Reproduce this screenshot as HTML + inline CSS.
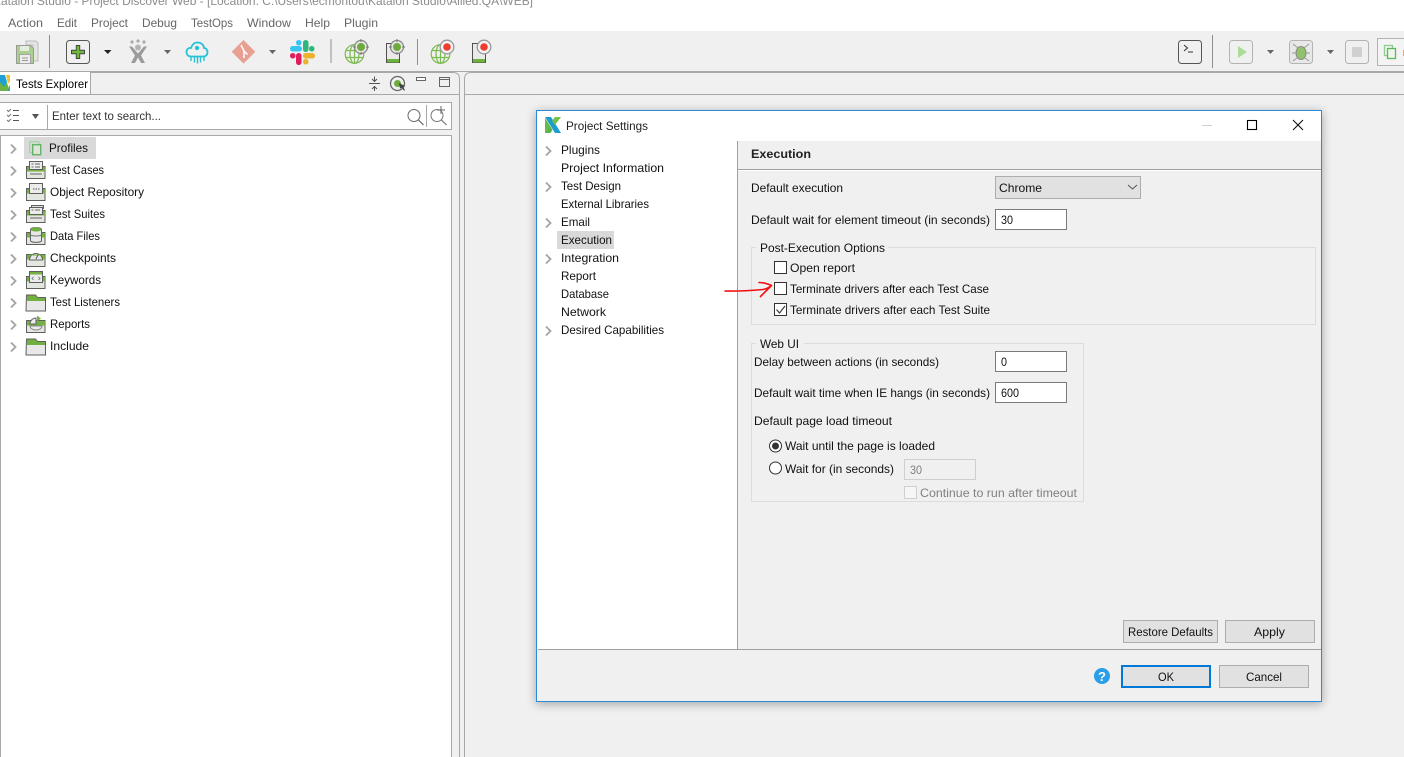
<!DOCTYPE html>
<html><head><meta charset="utf-8"><title>Project Settings</title>
<style>
html,body{margin:0;padding:0;background:#fff;width:1404px;height:757px;overflow:hidden}
svg{display:block}
text{font-family:"Liberation Sans",sans-serif;font-size:12px;fill:#111}
</style></head><body>
<svg width="1404" height="757" viewBox="0 0 1404 757" xmlns="http://www.w3.org/2000/svg">
<defs>
<filter id="sh" x="-5%" y="-5%" width="110%" height="110%"><feGaussianBlur stdDeviation="5"/></filter>
<g id="chev"><path d="M-3-4.500 1.500 0-3 4.500" fill="none" stroke="#a6a6a6" stroke-width="1.900"/></g>
<g id="base"><path d="M.5 5.500h18.500v12h-18.500z" fill="#e4e7e0" stroke="#5f5f5f"/><path d="M1 6h18v4.500h-18z" fill="#74b043"/></g>
<g id="folder"><path d="M.5 1.500h9l2 2.500h8v13.500h-19.500z" fill="#e8e8e8" stroke="#5f5f5f"/><path d="M1 2h8.500l2 2.500h7.500v3h-18z" fill="#6fb03e"/></g>
</defs>

<!-- window chrome -->
<rect width="1404" height="757" fill="#f0f0f0"/>
<rect width="1404" height="31" fill="#fff"/>
<text x="-7" y="5" textLength="540" lengthAdjust="spacingAndGlyphs" style="fill:#8c8c8c">Katalon Studio - Project Discover Web - [Location: C:\Users\ecmontou\Katalon Studio\Allied.QA\WEB]</text>
<text x="8" y="27" textLength="35" lengthAdjust="spacingAndGlyphs" style="fill:#666">Action</text>
<text x="57" y="27" textLength="20" lengthAdjust="spacingAndGlyphs" style="fill:#666">Edit</text>
<text x="91" y="27" textLength="37" lengthAdjust="spacingAndGlyphs" style="fill:#666">Project</text>
<text x="142" y="27" textLength="35" lengthAdjust="spacingAndGlyphs" style="fill:#666">Debug</text>
<text x="191" y="27" textLength="42" lengthAdjust="spacingAndGlyphs" style="fill:#666">TestOps</text>
<text x="247" y="27" textLength="44" lengthAdjust="spacingAndGlyphs" style="fill:#666">Window</text>
<text x="305" y="27" textLength="25" lengthAdjust="spacingAndGlyphs" style="fill:#666">Help</text>
<text x="344" y="27" textLength="34" lengthAdjust="spacingAndGlyphs" style="fill:#666">Plugin</text>

<!-- toolbar -->
<path d="M0 71.500H1404" stroke="#a8a8a8"/>
<path d="M49.500 35v33M331 39v24M417.500 39v26M1212.500 35v33" stroke="#8f8f8f"/>
<!-- save -->
<path d="M26 41h10l2 2v18h-5v-16h-7z" fill="#e4e4e4" stroke="#bbb"/>
<path d="M16.500 45.500h14l3 3v15h-17z" fill="#a9d08e" stroke="#9a9a9a"/>
<rect x="20" y="46" width="9" height="5" fill="#e4ecdf"/><rect x="19.500" y="54.500" width="11" height="9" fill="#ededed" stroke="#a5a5a5"/><path d="M22 58h6M22 60.500h6" stroke="#999"/>
<!-- new -->
<rect x="66.500" y="40.500" width="23" height="23" rx="3" fill="none" stroke="#555"/>
<path d="M78 45v14M71 52h14" stroke="#444" stroke-width="4.400"/>
<path d="M78 46v12M72 52h12" stroke="#6fb83c" stroke-width="2.600"/>
<path d="M104 50h7.500l-3.700 4z" fill="#222"/>
<!-- jenkins figure -->
<circle cx="138" cy="47.500" r="3" fill="#b4b4b4"/><circle cx="132" cy="42" r="1.600" fill="#aaa"/><circle cx="138" cy="41" r="1.600" fill="#aaa"/><circle cx="144" cy="42" r="1.600" fill="#aaa"/>
<path d="M129 46.500h3l6 7 6-7h3l-6 9 4 7.500h-4l-3-5.500-3 5.500h-4l4-7.500z" fill="#9b9b9b"/>
<path d="M164 50h7l-3.500 4z" fill="#666"/>
<!-- cloud -->
<path d="M191 56.500c-3.500 0-4.500-2.500-4.500-4.500 0-3 2.500-4.500 4.500-4 1-3.500 3.500-5.500 6.500-5.500 4 0 6.500 3 6.500 5.500 2 0 3.500 2 3.500 4.500 0 2-1.500 4-4 4z" fill="none" stroke="#26c3d8" stroke-width="1.800"/>
<path d="M191 56v5M194.500 56v6.500M197.500 56v7.500M200.500 56v6.500M204 56v5" stroke="#26c3d8" stroke-width="1.400"/>
<circle cx="197" cy="48" r="2.200" fill="#26c3d8"/>
<!-- git -->
<path d="M243.500 40l11.800 11.800-11.800 11.800-11.800-11.800z" fill="#e8a093"/>
<path d="M241 45l3 6v7M244 51l3.500 3.500" stroke="#fff" stroke-width="1.500" fill="none"/>
<path d="M269 50h7l-3.500 4z" fill="#666"/>
<!-- slack -->
<rect x="290" y="46" width="12" height="5.500" rx="2.700" fill="#36c5f0"/><rect x="296" y="40" width="5.500" height="5.500" rx="2.700" fill="#36c5f0"/>
<rect x="303" y="40" width="5.500" height="12" rx="2.700" fill="#2eb67d"/><rect x="309" y="46" width="5.500" height="5.500" rx="2.700" fill="#2eb67d"/>
<rect x="303" y="53" width="12" height="5.500" rx="2.700" fill="#ecb22e"/><rect x="303" y="59" width="5.500" height="5.500" rx="2.700" fill="#ecb22e"/>
<rect x="296" y="53" width="5.500" height="12" rx="2.700" fill="#e01e5a"/><rect x="290" y="53" width="5.500" height="5.500" rx="2.700" fill="#e01e5a"/>
<!-- spy globe/mobile -->
<g fill="none" stroke="#7dba52" stroke-width="1.200">
<circle cx="354.500" cy="54" r="9.300"/><ellipse cx="354.500" cy="54" rx="4.500" ry="9.300"/><path d="M346 50.500h17M346 57.500h17M354.500 44.500v19"/>
<circle cx="440.500" cy="54" r="9.300"/><ellipse cx="440.500" cy="54" rx="4.500" ry="9.300"/><path d="M432 50.500h17M432 57.500h17M440.500 44.500v19"/>
</g>
<rect x="386.500" y="43.500" width="13" height="19" fill="#eaeaea" stroke="#505050"/><rect x="387" y="59" width="12" height="3.500" fill="#6fb33f"/>
<rect x="472.500" y="43.500" width="13" height="19" fill="#eaeaea" stroke="#505050"/><rect x="473" y="59" width="12" height="3.500" fill="#6fb33f"/>
<g fill="#e8e8e8" stroke="#8a8a8a" stroke-width="1.300"><circle cx="361" cy="47" r="6.500"/><circle cx="397" cy="47" r="6.500"/></g>
<path d="M361 39v3M361 52v3M353 47h3M366 47h3M397 39v3M397 52v3M389 47h3M402 47h3" stroke="#777"/>
<circle cx="361" cy="47" r="4" fill="#6eaa3d"/><circle cx="397" cy="47" r="4" fill="#6eaa3d"/>
<circle cx="447" cy="47" r="6.800" fill="#f3f3f3" stroke="#999" stroke-width="1.300"/><circle cx="484" cy="47" r="6.800" fill="#f3f3f3" stroke="#999" stroke-width="1.300"/>
<circle cx="447" cy="47" r="3.800" fill="#f23b2f"/><circle cx="484" cy="47" r="3.800" fill="#f23b2f"/>
<!-- right toolbar -->
<rect x="1178.500" y="40.500" width="23" height="23" rx="3" fill="none" stroke="#555"/>
<path d="M1184 45l3.500 3-3.500 3M1188 52h5" stroke="#333" fill="none"/>
<rect x="1229.500" y="40.500" width="23" height="23" rx="3" fill="none" stroke="#b3b3b3"/>
<path d="M1238 46l9 6-9 6z" fill="#addb9a"/>
<path d="M1267 50h7l-3.500 4z" fill="#666"/>
<rect x="1289.500" y="40.500" width="23" height="23" rx="3" fill="#e8e8e8" stroke="#b3b3b3"/>
<ellipse cx="1301" cy="53" rx="5" ry="6.500" fill="#93c26c" stroke="#888"/>
<path d="M1293 44l5 4M1309 44l-5 4M1292 53h4M1310 53h-4M1293 61l4-3M1309 61l-4-3" stroke="#999"/>
<path d="M1327 50h7l-3.500 4z" fill="#666"/>
<rect x="1345.500" y="40.500" width="23" height="23" rx="3" fill="none" stroke="#b3b3b3"/>
<rect x="1352" y="47" width="10" height="10" fill="#d0d0d0"/>
<rect x="1377.500" y="38.500" width="30" height="27" fill="#f4f4f4" stroke="#b3b3b3"/>
<rect x="1384.500" y="45.500" width="8" height="10" fill="none" stroke="#8fcf8f" stroke-width="1.300"/><rect x="1387.500" y="48.500" width="8" height="10" fill="#eef5ea" stroke="#5cb85c" stroke-width="1.300"/>
<rect x="1403" y="50" width="1" height="6" fill="#ecb22e"/>

<!-- left part -->
<path d="M-1 94.500H90.500V72.500H453Q459.500 72.500 459.500 79V757" fill="none" stroke="#a8a8a8"/>
<path d="M0 72h90v22H0z" fill="#fff"/>
<path d="M90.500 72v22" stroke="#a8a8a8"/>
<path d="M90 94.500H459" stroke="#a8a8a8"/>
<path d="M0 75h4l6 16H0z" fill="#6eb33f"/><path d="M0 75h5l2 7-3 5-4-5z" fill="#1e9fd8"/><path d="M6 75h4v6l-2 3z" fill="#f2c230"/><path d="M10 84v7H8z" fill="#2b9fd8"/>
<text x="16" y="88" textLength="72" lengthAdjust="spacingAndGlyphs" style="fill:#000">Tests Explorer</text>
<path d="M374.500 76.500v5M374.500 86v5M369 83.500h11M372 79l2.500 2.500 2.500-2.500M372 89l2.500-2.500 2.500 2.500" stroke="#555" fill="none"/>
<circle cx="397.500" cy="83.500" r="7" fill="none" stroke="#666" stroke-width="1.300"/><circle cx="397.500" cy="83.500" r="3.500" fill="#6eaa3d"/><path d="M399 83l6 3-2 1 2 3-1 .7-2-3-2 1z" fill="#444"/>
<rect x="416.500" y="77.500" width="9" height="3" fill="#fff" stroke="#666"/>
<rect x="439.500" y="77.500" width="10" height="9" fill="none" stroke="#666"/><path d="M440 79.500h9" stroke="#666"/>

<!-- search -->
<rect x="-1" y="102.500" width="452.500" height="27" fill="#fff" stroke="#a8a8a8"/>
<path d="M47.500 105v24M426.500 105v22" stroke="#a8a8a8"/>
<path d="M7 110l1.500 1.500 2.500-2.500M7 115l1.500 1.500 2.500-2.500M7 120l1.500 1.500 2.500-2.500" stroke="#777" fill="none"/>
<path d="M13 110.500h6M13 115.500h6M13 120.500h6" stroke="#555"/>
<path d="M32 114h7l-3.500 5z" fill="#555"/>
<text x="52" y="120" textLength="109" lengthAdjust="spacingAndGlyphs" style="fill:#333">Enter text to search...</text>
<circle cx="414" cy="115.500" r="6" fill="none" stroke="#666"/><path d="M418.500 120l5 5" stroke="#666" stroke-width="1.200"/>
<circle cx="437" cy="115.500" r="6" fill="none" stroke="#777"/><path d="M441.500 120l5 5" stroke="#777" stroke-width="1.200"/><path d="M441 106v8M437 110h8" stroke="#666"/>

<!-- tree -->
<path d="M.5 757V135.500H451.500V757" fill="#fff" stroke="#a8a8a8"/>
<rect x="24" y="137" width="72" height="22" fill="#d9d9d9"/>
<use href="#chev" x="14" y="149"/><use href="#chev" x="14" y="171"/><use href="#chev" x="14" y="193"/><use href="#chev" x="14" y="215"/><use href="#chev" x="14" y="237"/><use href="#chev" x="14" y="259"/><use href="#chev" x="14" y="281"/><use href="#chev" x="14" y="303"/><use href="#chev" x="14" y="325"/><use href="#chev" x="14" y="347"/>
<rect x="29.700" y="141.700" width="9" height="11" fill="none" stroke="#a6d8a6" stroke-width="1.400"/><rect x="32.700" y="144.700" width="8" height="10" fill="#dfe3dc" stroke="#62b562" stroke-width="1.400"/>
<!-- test cases -->
<g transform="translate(26 161)"><use href="#base"/><rect x="3.500" y=".5" width="13" height="8" fill="#ececec" stroke="#5f5f5f"/><path d="M5.500 3h2M9 3h5M5.500 6h2M9 6h5M4 13h12" stroke="#666"/></g>
<!-- object repo -->
<g transform="translate(26 183)"><use href="#base"/><rect x="3.500" y=".5" width="13" height="10" fill="#ececec" stroke="#5f5f5f"/><path d="M7 6h1.500M9.500 6H11M12 6h1.500" stroke="#555"/></g>
<!-- test suites -->
<g transform="translate(26 205)"><use href="#base"/><rect x="5.500" y=".5" width="12" height="3" fill="#ddd" stroke="#5f5f5f"/><rect x="3.500" y="2.500" width="13" height="7" fill="#ececec" stroke="#5f5f5f"/><path d="M5.500 5h2M9 5h5M4 13h12" stroke="#666"/></g>
<!-- data -->
<g transform="translate(26 227)"><use href="#base"/><path d="M4.500 2.500c0-2.500 11-2.500 11 0v11c0 2.500-11 2.500-11 0z" fill="#e8e8e8" stroke="#5f5f5f"/><ellipse cx="10" cy="2.500" rx="5.500" ry="2" fill="#6fb03e"/><path d="M4.500 7.500c0 2 11 2 11 0" fill="none" stroke="#777"/></g>
<!-- checkpoint -->
<g transform="translate(26 249)"><use href="#base"/><path d="M3.500 11a6.500 6.500 0 0 1 13 0z" fill="#e8e8e8" stroke="#5f5f5f"/><path d="M3.500 6h13" stroke="#6fb03e"/><path d="M10 10l2-4" stroke="#555"/></g>
<!-- keywords -->
<g transform="translate(26 271)"><use href="#base"/><rect x="3.500" y=".5" width="13" height="11" fill="#ececec" stroke="#5f5f5f"/><rect x="4" y="1" width="12" height="2.500" fill="#74b043"/><path d="M7.500 6L6 7.500 7.500 9M12.500 6L14 7.500 12.500 9" fill="none" stroke="#888"/></g>
<use href="#folder" x="26" y="293.500"/>
<!-- reports -->
<g transform="translate(26 315)"><use href="#base"/><path d="M4 9a6 6 0 0 1 6-6v6z" fill="#ececec" stroke="#5f5f5f"/><path d="M11 .5l4 3-4 3z" fill="#6fb03e"/><path d="M4 11a6 4 0 0 0 12 0z" fill="#ececec" stroke="#888"/></g>
<use href="#folder" x="26" y="337.500"/>
<text x="49" y="152" textLength="39" lengthAdjust="spacingAndGlyphs">Profiles</text>
<text x="50" y="174" textLength="54" lengthAdjust="spacingAndGlyphs">Test Cases</text>
<text x="50" y="196" textLength="94" lengthAdjust="spacingAndGlyphs">Object Repository</text>
<text x="50" y="218" textLength="55" lengthAdjust="spacingAndGlyphs">Test Suites</text>
<text x="50" y="240" textLength="50" lengthAdjust="spacingAndGlyphs">Data Files</text>
<text x="50" y="262" textLength="66" lengthAdjust="spacingAndGlyphs">Checkpoints</text>
<text x="50" y="284" textLength="51" lengthAdjust="spacingAndGlyphs">Keywords</text>
<text x="50" y="306" textLength="70" lengthAdjust="spacingAndGlyphs">Test Listeners</text>
<text x="50" y="328" textLength="40" lengthAdjust="spacingAndGlyphs">Reports</text>
<text x="50" y="350" textLength="39" lengthAdjust="spacingAndGlyphs">Include</text>

<!-- right editor area -->
<path d="M464.500 757V79Q464.500 72.500 471 72.500H1404" fill="none" stroke="#a8a8a8"/>
<path d="M465 94.500H1404" stroke="#a8a8a8"/>

<!-- dialog -->
<rect x="536" y="112" width="786" height="592" fill="#000" opacity=".32" filter="url(#sh)"/>
<rect x="536.500" y="110.500" width="785" height="591" fill="#f0f0f0" stroke="#2b8ad6"/>
<rect x="537" y="111" width="784" height="30" fill="#fff"/>
<rect x="537" y="141" width="200" height="508" fill="#fff"/>
<path d="M737.500 141V649" stroke="#a0a0a0"/>
<path d="M538 649.500H1321" stroke="#a0a0a0"/>
<path d="M738 169.500H1321" stroke="#a0a0a0"/><path d="M738 170.500H1321" stroke="#fff"/>
<!-- logo -->
<path d="M545 117h6l10 16h-6z" fill="#1d9ccf"/><path d="M545 118l4.500 7-4.500 8z" fill="#63bb45"/><path d="M545 133l4.500-8 3 5-2 3z" fill="#58b648"/><path d="M555 117h6l-6 8-3-4z" fill="#72c044"/>
<text x="566" y="130" textLength="82" lengthAdjust="spacingAndGlyphs" style="fill:#222">Project Settings</text>
<path d="M1202 125.500h10" stroke="#d0d0d0"/>
<rect x="1247.500" y="120.500" width="9" height="9" fill="none" stroke="#000" stroke-width="1.100"/>
<path d="M1293 120l10 10M1303 120l-10 10" stroke="#111" stroke-width="1.100"/>

<!-- settings nav -->
<rect x="557" y="231" width="57" height="18" fill="#d9d9d9"/>
<use href="#chev" x="549" y="151"/><use href="#chev" x="549" y="187"/><use href="#chev" x="549" y="223"/><use href="#chev" x="549" y="259"/><use href="#chev" x="549" y="331"/>
<text x="561" y="154" textLength="39" lengthAdjust="spacingAndGlyphs">Plugins</text>
<text x="561" y="172" textLength="103" lengthAdjust="spacingAndGlyphs">Project Information</text>
<text x="561" y="190" textLength="60" lengthAdjust="spacingAndGlyphs">Test Design</text>
<text x="561" y="208" textLength="88" lengthAdjust="spacingAndGlyphs">External Libraries</text>
<text x="561" y="226" textLength="29" lengthAdjust="spacingAndGlyphs">Email</text>
<text x="561" y="244" textLength="51" lengthAdjust="spacingAndGlyphs">Execution</text>
<text x="561" y="262" textLength="58" lengthAdjust="spacingAndGlyphs">Integration</text>
<text x="561" y="280" textLength="35" lengthAdjust="spacingAndGlyphs">Report</text>
<text x="561" y="298" textLength="48" lengthAdjust="spacingAndGlyphs">Database</text>
<text x="561" y="316" textLength="45" lengthAdjust="spacingAndGlyphs">Network</text>
<text x="561" y="334" textLength="103" lengthAdjust="spacingAndGlyphs">Desired Capabilities</text>

<!-- execution page -->
<text x="751" y="158" textLength="60" lengthAdjust="spacingAndGlyphs" style="font-weight:700;fill:#222">Execution</text>
<text x="751" y="192" textLength="92" lengthAdjust="spacingAndGlyphs">Default execution</text>
<rect x="995.500" y="176.500" width="145" height="22" fill="#e1e1e1" stroke="#adadad"/>
<text x="999" y="192" textLength="43" lengthAdjust="spacingAndGlyphs">Chrome</text>
<path d="M1128 185l4.500 4 4.500-4" fill="none" stroke="#555"/>
<text x="751" y="224" textLength="239" lengthAdjust="spacingAndGlyphs">Default wait for element timeout (in seconds)</text>
<rect x="995.500" y="209.500" width="71" height="20" fill="#fff" stroke="#7a7a7a"/>
<text x="1001" y="224" textLength="12" lengthAdjust="spacingAndGlyphs">30</text>

<!-- group post-exec -->
<rect x="751.500" y="247.500" width="564" height="77" fill="none" stroke="#dcdcdc"/>
<rect x="756" y="243" width="132" height="9" fill="#f0f0f0"/>
<text x="760" y="252" textLength="125" lengthAdjust="spacingAndGlyphs">Post-Execution Options</text>
<rect x="774.500" y="261.500" width="12" height="12" fill="#fff" stroke="#333"/>
<text x="790" y="272" textLength="65" lengthAdjust="spacingAndGlyphs">Open report</text>
<rect x="774.500" y="282.500" width="12" height="12" fill="#fff" stroke="#333"/>
<text x="790" y="293" textLength="199" lengthAdjust="spacingAndGlyphs">Terminate drivers after each Test Case</text>
<rect x="774.500" y="303.500" width="12" height="12" fill="#fff" stroke="#333"/>
<path d="M776.500 309.500l3 3.500 5.500-7" fill="none" stroke="#444" stroke-width="1.300"/>
<text x="790" y="314" textLength="200" lengthAdjust="spacingAndGlyphs">Terminate drivers after each Test Suite</text>
<!-- red arrow -->
<path d="M725 291c14 .5 26-.5 38-1.500 3-.5 6-2 8.500-4M759 282.500c4 0 8 1 12.500 3-3 3-7 7-11 11" fill="none" stroke="#f01010" stroke-width="1.600" stroke-linecap="round" stroke-linejoin="round"/>

<!-- group web ui -->
<rect x="751.500" y="343.500" width="332" height="158" fill="none" stroke="#dcdcdc"/>
<rect x="756" y="339" width="48" height="9" fill="#f0f0f0"/>
<text x="760" y="348" textLength="39" lengthAdjust="spacingAndGlyphs">Web UI</text>
<text x="754" y="366" textLength="185" lengthAdjust="spacingAndGlyphs">Delay between actions (in seconds)</text>
<rect x="995.500" y="351.500" width="71" height="20" fill="#fff" stroke="#7a7a7a"/>
<text x="1001" y="366" textLength="6" lengthAdjust="spacingAndGlyphs">0</text>
<text x="754" y="397" textLength="236" lengthAdjust="spacingAndGlyphs">Default wait time when IE hangs (in seconds)</text>
<rect x="995.500" y="382.500" width="71" height="20" fill="#fff" stroke="#7a7a7a"/>
<text x="1001" y="397" textLength="18" lengthAdjust="spacingAndGlyphs">600</text>
<text x="754" y="425" textLength="138" lengthAdjust="spacingAndGlyphs">Default page load timeout</text>
<circle cx="775.500" cy="446" r="6" fill="#fff" stroke="#333"/><circle cx="775.500" cy="446" r="3.500" fill="#333"/>
<text x="785" y="450" textLength="150" lengthAdjust="spacingAndGlyphs">Wait until the page is loaded</text>
<circle cx="775.500" cy="468" r="6" fill="#fff" stroke="#333"/>
<text x="785" y="473" textLength="109" lengthAdjust="spacingAndGlyphs">Wait for (in seconds)</text>
<rect x="904.500" y="459.500" width="71" height="20" fill="#f0f0f0" stroke="#cfcfcf"/>
<text x="910" y="474" textLength="12" lengthAdjust="spacingAndGlyphs" style="fill:#808080">30</text>
<rect x="904.500" y="486.500" width="12" height="12" fill="#f6f6f6" stroke="#cfcfcf"/>
<text x="920" y="497" textLength="157" lengthAdjust="spacingAndGlyphs" style="fill:#808080">Continue to run after timeout</text>

<!-- buttons -->
<rect x="1123.500" y="620.500" width="94" height="22" fill="#e1e1e1" stroke="#adadad"/>
<text x="1128" y="636" textLength="85" lengthAdjust="spacingAndGlyphs">Restore Defaults</text>
<rect x="1225.500" y="620.500" width="89" height="22" fill="#e1e1e1" stroke="#adadad"/>
<text x="1254" y="636" textLength="31" lengthAdjust="spacingAndGlyphs">Apply</text>
<circle cx="1102" cy="676" r="8" fill="#2a9ee8"/>
<text x="1102" y="681" text-anchor="middle" style="font-weight:700;font-size:13px;fill:#fff">?</text>
<rect x="1122" y="666" width="88" height="21" fill="#e1e1e1" stroke="#0078d7" stroke-width="2"/>
<text x="1158" y="681" textLength="16" lengthAdjust="spacingAndGlyphs">OK</text>
<rect x="1219.500" y="665.500" width="89" height="22" fill="#e1e1e1" stroke="#adadad"/>
<text x="1246" y="681" textLength="36" lengthAdjust="spacingAndGlyphs">Cancel</text>
</svg>
</body></html>
